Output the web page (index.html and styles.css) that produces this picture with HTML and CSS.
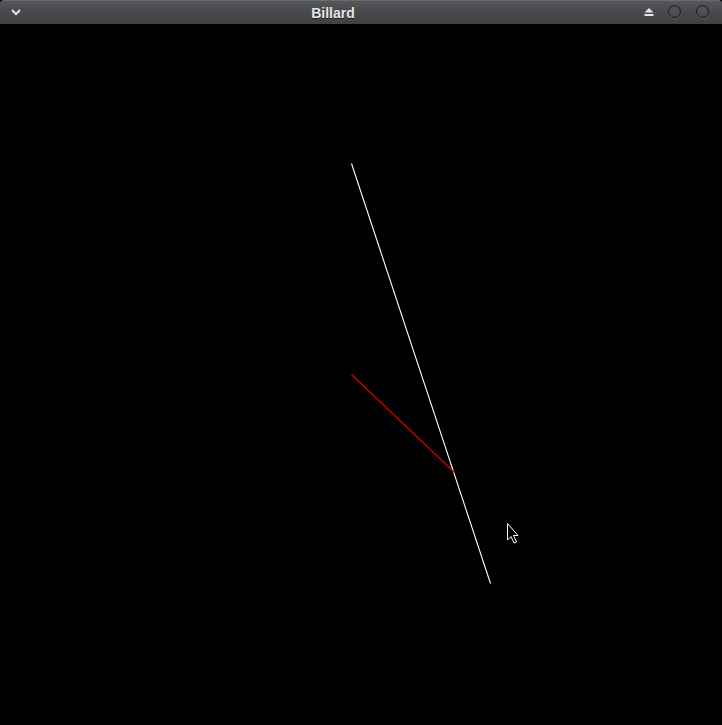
FILE: index.html
```html
<!DOCTYPE html>
<html>
<head>
<meta charset="utf-8">
<title>Billard</title>
<link rel="stylesheet" href="styles.css">
</head>
<body>
<div class="window">
  <div class="titlebar">
    <svg class="menu-icon" width="12" height="10" viewBox="0 0 12 10"><path d="M2 3 L6 7 L10 3" fill="none" stroke="#e8e8e8" stroke-width="2"/></svg>
    <div class="title">Billard</div>
    <div class="controls">
      <svg class="eject" width="12" height="10" viewBox="0 0 12 10"><path d="M6 1 L10.5 5.5 L1.5 5.5 Z" fill="#e4e4e4"/><rect x="1.5" y="7" width="9" height="2" fill="#e4e4e4"/></svg>
      <span class="btn"></span>
      <span class="btn"></span>
    </div>
  </div>
  <div class="canvas">
    <svg width="722" height="701" viewBox="0 0 722 701">
      <line x1="351.5" y1="139.5" x2="490.5" y2="559.5" stroke="#ffffff" stroke-width="1.1"/>
      <line x1="351.5" y1="350.5" x2="454.5" y2="448.5" stroke="#d40000" stroke-width="1.3"/>
      <path d="M507.5 499.5 L507.5 516 L511 512.5 L514 519 L516.5 518 L513.5 511.5 L518 511.5 Z" fill="#000" stroke="#fff" stroke-width="1" stroke-linejoin="miter"/>
    </svg>
  </div>
</div>
</body>
</html>
```
FILE: styles.css
```css
html, body {
  margin: 0;
  padding: 0;
  background: #000;
}
.window {
  width: 722px;
  height: 725px;
  display: flex;
  flex-direction: column;
  background: #000;
}
.titlebar {
  height: 24px;
  flex: 0 0 24px;
  box-sizing: border-box;
  border-radius: 4px 4px 0 0;
  background: linear-gradient(#56575a 0%, #4a4b4e 40%, #404144 100%);
  border-top: 1px solid #6a6b6e;
  position: relative;
  display: flex;
  align-items: center;
  justify-content: center;
}
.menu-icon {
  position: absolute;
  left: 10px;
  top: 6px;
}
.title {
  font-family: "Liberation Sans", Arial, sans-serif;
  font-weight: bold;
  font-size: 14px;
  color: #e6e6e6;
  text-shadow: 0 1px 0 #1e1e1e;
  margin-top: 1px;
  margin-right: 56px;
}
.controls {
  position: absolute;
  right: 13px;
  top: 4px;
  display: flex;
  align-items: center;
  gap: 15px;
}
.eject {
  margin-right: -2px;
}
.btn {
  width: 13px;
  height: 13px;
  border-radius: 50%;
  box-sizing: border-box;
  border: 1px solid #1c1c1e;
  background: radial-gradient(circle at 50% 40%, #56575a 0%, #48494c 70%, #3a3b3d 100%);
  box-shadow: 0 1px 0 #5e5f62;
}
.canvas {
  flex: 1;
  background: #000;
}
.canvas svg {
  display: block;
}
```
